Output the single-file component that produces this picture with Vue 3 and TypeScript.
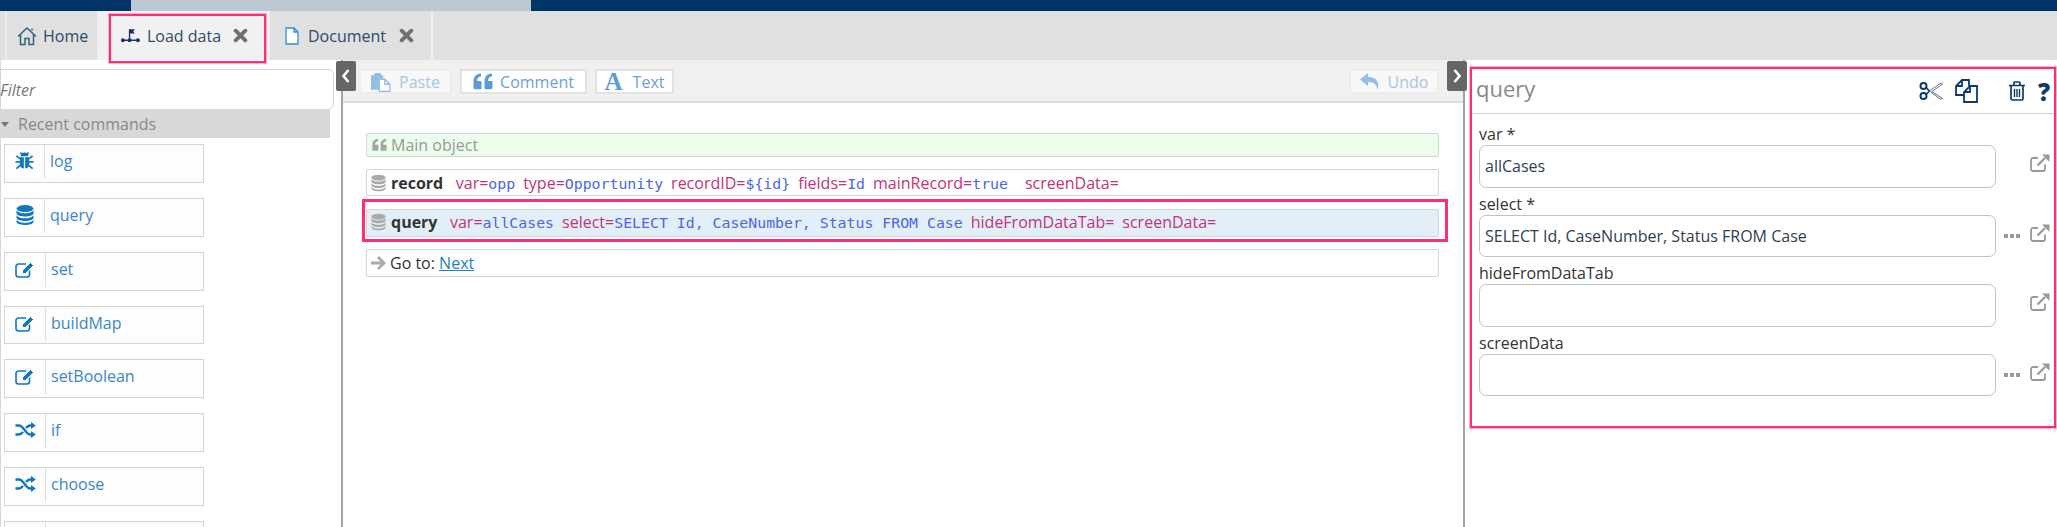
<script setup lang="ts">
interface Cmd { name: string; icon: string; short?: boolean }
interface Param { k: string; v?: string }
interface Field { label: string; value: string; dots: boolean }

const commands: Cmd[] = [
  { name: 'log', icon: 'bug' },
  { name: 'query', icon: 'db' },
  { name: 'set', icon: 'edit' },
  { name: 'buildMap', icon: 'edit', short: true },
  { name: 'setBoolean', icon: 'edit' },
  { name: 'if', icon: 'random' },
  { name: 'choose', icon: 'random' },
  { name: '', icon: 'random' },
]
const recordParams: Param[] = [
  { k: 'var=', v: 'opp' },
  { k: 'type=', v: 'Opportunity' },
  { k: 'recordID=', v: '${id}' },
  { k: 'fields=', v: 'Id' },
  { k: 'mainRecord=', v: 'true ' },
  { k: 'screenData=' },
]
const queryParams: Param[] = [
  { k: 'var=', v: 'allCases' },
  { k: 'select=', v: 'SELECT Id, CaseNumber, Status FROM Case' },
  { k: 'hideFromDataTab=' },
  { k: 'screenData=' },
]
const fields: Field[] = [
  { label: 'var *', value: 'allCases', dots: false },
  { label: 'select *', value: 'SELECT Id, CaseNumber, Status FROM Case', dots: true },
  { label: 'hideFromDataTab', value: '', dots: false },
  { label: 'screenData', value: '', dots: true },
]
</script>

<template>
  <div class="page">
    <svg class="sprite" width="0" height="0" aria-hidden="true">
      <symbol id="home" viewBox="0 0 20 20">
        <path d="M1 10.5 10 2l9 8.500M3.500 8.500V18.500h4.500v-6h4v6h4.500V8.500M15 2.500v2" fill="none" stroke="currentColor" stroke-width="1.500" />
      </symbol>
      <symbol id="flow" viewBox="0 0 20 15">
        <path d="M1.500 12.500h17M9 12.500V1" fill="none" stroke="currentColor" stroke-width="1.400" />
        <path d="M9 1h5.500L13 3.200l1.500 2.300H9z" fill="currentColor" />
        <circle cx="2" cy="12.500" r="2" fill="currentColor" />
        <circle cx="9" cy="12.500" r="2" fill="currentColor" />
        <circle cx="17.800" cy="12.500" r="2" fill="currentColor" />
      </symbol>
      <symbol id="close" viewBox="0 0 14 14">
        <path d="M2.500 2.500l9 9M11.500 2.500l-9 9" fill="none" stroke="currentColor" stroke-width="3.600" stroke-linecap="round" />
      </symbol>
      <symbol id="doc" viewBox="0 0 14 18">
        <path d="M1 1h8l4 4v12H1zM9 1v4h4" fill="#fff" stroke="currentColor" stroke-width="1.300" />
      </symbol>
      <symbol id="bug" viewBox="0 0 20 20">
        <path d="M6 5a4 4 0 0 1 8 0z" fill="currentColor" />
        <path d="M5 6h4.300v12C6.500 17.700 5 15.500 5 13zM10.700 6H15v7c0 2.500-1.500 4.700-4.300 5z" fill="currentColor" />
        <path d="M1.500 4.500 5 7.500M18.500 4.500 15 7.500M.5 11h4.500M19.500 11H15M1.500 18l4-3.500M18.500 18l-4-3.500M7 3 5.800 1M13 3l1.200-2" fill="none" stroke="currentColor" stroke-width="1.800" />
      </symbol>
      <symbol id="db" viewBox="0 0 18 20">
        <ellipse cx="9" cy="3.600" rx="8.500" ry="3.500" fill="currentColor" />
        <path d="M.5 5.200C2 7.600 6 8.300 9 8.300s7-.7 8.500-3.100V8.400c-1 2.300-5 3-8.500 3s-7.500-.7-8.500-3z" fill="currentColor" />
        <path d="M.5 10.200C2 12.600 6 13.300 9 13.300s7-.7 8.500-3.100V13c-1 2.300-5 3-8.500 3s-7.500-.7-8.500-3z" fill="currentColor" />
        <path d="M.5 14.800c1.500 2.400 5.500 3.100 8.500 3.100s7-.7 8.500-3.100V17c-1 2.300-5 3-8.500 3s-7.500-.7-8.500-3z" fill="currentColor" />
      </symbol>
      <symbol id="edit" viewBox="0 0 21 17">
        <path d="M14.500 9.500V13.500a2.500 2.500 0 0 1-2.500 2.500H3.500A2.500 2.500 0 0 1 1 13.500V5.500A2.500 2.500 0 0 1 3.500 3H11" fill="none" stroke="currentColor" stroke-width="1.600" />
        <path d="M7.500 9.500 15.500 1.500l3 3L10.500 12.500H7.500z" fill="currentColor" stroke="#fdfdfd" stroke-width="1" />
      </symbol>
      <symbol id="random" viewBox="0 0 21 16">
        <path d="M.5 3.500H4c4.500 0 7 9 11 9h2M.5 12.500H4c1.800 0 3-1.200 4-2.600M11 6c1-1.300 2.300-2.500 4-2.500h2" fill="none" stroke="currentColor" stroke-width="2.300" />
        <path d="M16 0l4.800 3.500L16 7zM16 9l4.800 3.500L16 16z" fill="currentColor" />
      </symbol>
      <symbol id="quote" viewBox="0 0 20 17">
        <path d="M8.500 8.500v6.500a1.300 1.300 0 0 1-1.300 1.300H1.500A1.300 1.300 0 0 1 .5 15V8C.5 3.500 3.500.5 8 .5v3C5.500 3.500 4 5.500 4 8h3.200a1.300 1.300 0 0 1 1.300.5zM19.500 8.500v6.500a1.300 1.300 0 0 1-1.300 1.300h-5.700a1.300 1.300 0 0 1-1-1.300V8c0-4.500 3-7.500 7.500-7.500v3c-2.500 0-4 2-4 4.500h3.200a1.300 1.300 0 0 1 1.300.5z" fill="currentColor" />
      </symbol>
      <symbol id="paste" viewBox="0 0 18 18">
        <path d="M0 3h3V1h6v2h2v3H7v10H0z" fill="currentColor" />
        <path d="M7.500 6.500h5l4.500 4.500v6.500H7.500zM12.500 6.500V11H17" fill="#fff" stroke="currentColor" stroke-width="1.200" />
      </symbol>
      <symbol id="undo" viewBox="0 0 20 17">
        <path d="M8 0 0 6.500 8 13V9c5 0 8.500 1 9.500 8C20 10 17 4 8 4z" fill="currentColor" />
      </symbol>
      <symbol id="arrow" viewBox="0 0 15 14">
        <path d="M8 0l7 7-7 7-2-2 3.500-3.500H0v-3h9.500L6 2z" fill="currentColor" />
      </symbol>
      <symbol id="scissors" viewBox="0 0 24 18">
        <circle cx="4.500" cy="4" r="3" fill="none" stroke="currentColor" stroke-width="2" />
        <circle cx="4.500" cy="14" r="3" fill="none" stroke="currentColor" stroke-width="2" />
        <path d="M7 5.500 10.500 9 7 12.500" fill="none" stroke="currentColor" stroke-width="1.600" />
        <path d="M10.500 9 21 1.500l2.500.5L13 9.500l10.500 7-2.500.5z" fill="#fff" stroke="#5a7894" stroke-width="1" />
      </symbol>
      <symbol id="copy" viewBox="0 0 24 24">
        <path d="M15 7V1H8L2 7v9h8M8 1v6H2" fill="none" stroke="currentColor" stroke-width="1.800" />
        <path d="M16 7h7v16H10V13zM16 7v6h-6" fill="#fff" stroke="currentColor" stroke-width="1.800" />
      </symbol>
      <symbol id="trash" viewBox="0 0 18 20">
        <path d="M1 4.500h16M6 4.500V2a1 1 0 0 1 1-1h4a1 1 0 0 1 1 1v2.500M3 4.500V18a1.500 1.500 0 0 0 1.500 1h9a1.500 1.500 0 0 0 1.500-1V4.500" fill="none" stroke="currentColor" stroke-width="1.700" />
        <path d="M6.500 8v8M9 8v8M11.500 8v8" fill="none" stroke="currentColor" stroke-width="1.400" />
      </symbol>
      <symbol id="ext" viewBox="0 0 20 18">
        <path d="M15 10.500V15a2 2 0 0 1-2 2H3a2 2 0 0 1-2-2V6a2 2 0 0 1 2-2h5" fill="none" stroke="currentColor" stroke-width="1.800" />
        <path d="M7.500 11.500 15 4" fill="none" stroke="currentColor" stroke-width="2.300" />
        <path d="M12 .5h7.500V8z" fill="currentColor" />
      </symbol>
    </svg>

    <div class="topbar">
      <div class="seg seg-a"></div>
      <div class="seg seg-b"></div>
      <div class="seg seg-c"></div>
    </div>

    <nav class="tabs">
      <div class="tab tab-home">
        <svg class="i-home"><use href="#home" /></svg>
        <span>Home</span>
      </div>
      <div class="tab tab-load">
        <svg class="i-flow"><use href="#flow" /></svg>
        <span>Load data</span>
        <svg class="i-close"><use href="#close" /></svg>
        <div class="tab-mark"></div>
      </div>
      <div class="tab tab-doc">
        <svg class="i-doc"><use href="#doc" /></svg>
        <span>Document</span>
        <svg class="i-close"><use href="#close" /></svg>
      </div>
    </nav>

    <main class="body">
      <aside class="left">
        <div class="filter">Filter</div>
        <div class="recent"><span class="caret"></span>Recent commands</div>
        <ul class="cmds">
          <li v-for="c in commands" :key="c.icon + c.name" class="cmd" :class="{ short: c.short, wide: c.icon !== 'bug' && c.icon !== 'db' }">
            <span class="cmd-icon"><svg :class="'ci-' + c.icon"><use :href="'#' + c.icon" /></svg></span>
            <span class="cmd-name">{{ c.name }}</span>
          </li>
        </ul>
        <button class="toggle toggle-l" aria-label="Collapse">
          <svg viewBox="0 0 10 16"><path d="M7.500 2 2.500 8l5 6" fill="none" stroke="#fff" stroke-width="2.600" /></svg>
        </button>
      </aside>

      <section class="center">
        <div class="toolbar">
          <button class="tbtn off btn-paste"><svg class="ti"><use href="#paste" /></svg>Paste</button>
          <button class="tbtn btn-comment"><svg class="ti ti-q"><use href="#quote" /></svg>Comment</button>
          <button class="tbtn btn-text"><span class="glyph-a">A</span>Text</button>
          <button class="tbtn off btn-undo"><svg class="ti ti-u"><use href="#undo" /></svg>Undo</button>
        </div>
        <div class="rows">
          <div class="row row-comment"><svg class="ri-q"><use href="#quote" /></svg>Main object</div>
          <div class="row row-cmd">
            <svg class="ri"><use href="#db" /></svg><b>record</b>
            <span class="params">
              <span v-for="p in recordParams" :key="p.k" class="param"><span class="k">{{ p.k }}</span><span class="v">{{ p.v }}</span></span>
            </span>
          </div>
          <div class="selected">
            <div class="row row-cmd row-sel">
              <svg class="ri"><use href="#db" /></svg><b>query</b>
              <span class="params">
                <span v-for="p in queryParams" :key="p.k" class="param"><span class="k">{{ p.k }}</span><span class="v">{{ p.v }}</span></span>
              </span>
            </div>
          </div>
          <div class="row row-goto">
            <svg class="ri-a"><use href="#arrow" /></svg>Go to:&nbsp;<a href="#" class="next">Next</a>
          </div>
        </div>
        <button class="toggle toggle-r" aria-label="Expand">
          <svg viewBox="0 0 10 16"><path d="M2.500 2l5 6-5 6" fill="none" stroke="#fff" stroke-width="2.600" /></svg>
        </button>
      </section>

      <aside class="right">
        <div class="props">
          <header class="props-head">
            <h2>query</h2>
            <svg class="hi hi-s"><use href="#scissors" /></svg>
            <svg class="hi hi-c"><use href="#copy" /></svg>
            <svg class="hi hi-t"><use href="#trash" /></svg>
            <span class="help">?</span>
          </header>
          <div class="form">
            <div v-for="f in fields" :key="f.label" class="field">
              <label>{{ f.label }}</label>
              <div class="line">
                <input class="inp" :value="f.value" readonly />
                <span class="dots"><template v-if="f.dots"><i></i><i></i><i></i></template></span>
                <svg class="ext"><use href="#ext" /></svg>
              </div>
            </div>
          </div>
        </div>
      </aside>
    </main>
  </div>
</template>

<style>
html, body { margin: 0; background: #fff; overflow: hidden; }
</style>

<style scoped>
.page {
  width: 2057px;
  height: 527px;
  overflow: hidden;
  display: flex;
  flex-direction: column;
  font-family: "Open Sans", "Noto Sans", sans-serif;
  font-size: 16px;
  color: #333;
  background: #fff;
}
.sprite { position: absolute; }
svg { display: block; flex: none; }

.topbar { height: 11px; display: flex; flex: none; }
.seg-a { width: 131px; background: #003366; }
.seg-b { width: 400px; background: #b9c8d3; }
.seg-c { flex: 1; background: #003366; }

.tabs {
  height: 49px;
  flex: none;
  display: flex;
  background: #e0e0e0;
  padding-left: 5px;
  color: #2d4a68;
  font-size: 16px;
}
.tab {
  display: flex;
  align-items: center;
  height: 49px;
  box-sizing: border-box;
  border-left: 2px solid #eee;
  position: relative;
}
.tab-home { width: 92px; padding-left: 10px; color: #2d4a68; }
.tab-home span { margin-left: 6px; }
.i-home { width: 20px; height: 20px; color: #33607f; }
.tab-load {
  width: 173px;
  padding-left: 24px;
  background: #f1f1f1;
  border-right: 2px solid #eee;
  border-left: 0;
}
.tab-load span { margin-left: 7px; }
.i-flow { width: 19px; height: 15px; color: #17345a; }
.i-close { width: 15px; height: 15px; color: #707070; }
.tab-load .i-close { margin-left: 12px; }
.tab-mark {
  position: absolute;
  left: 12px;
  top: 3px;
  width: 157px;
  height: 49px;
  box-sizing: border-box;
  border: 2px solid #ff2e6c;
  box-shadow: 0 0 0 1px rgba(255, 46, 108, 0.35);
  pointer-events: none;
}
.tab-doc {
  width: 163px;
  padding-left: 15px;
  border-left: 0;
  border-right: 2px solid #eee;
}
.tab-doc span { margin-left: 9px; }
.tab-doc .i-close { margin-left: 13px; }
.i-doc { width: 14px; height: 18px; color: #2f8fd0; }

.body { flex: 1; display: flex; min-height: 0; }

.left {
  width: 341px;
  flex: none;
  box-sizing: border-box;
  position: relative;
  z-index: 2;
  border-left: 1px solid #d8d8d8;
}
.filter {
  height: 41px;
  margin: 9px 7px 0 -6px;
  box-sizing: border-box;
  border: 1px solid #cfd8df;
  border-radius: 6px;
  padding-left: 4px;
  line-height: 41px;
  font-style: italic;
  color: #777;
}
.recent {
  height: 28px;
  width: 329px;
  background: #d8d8d8;
  color: #888;
  line-height: 28px;
  padding-left: 17px;
  box-sizing: border-box;
  position: relative;
}
.caret {
  position: absolute;
  left: 0;
  top: 12px;
  border-left: 4px solid transparent;
  border-right: 4px solid transparent;
  border-top: 5px solid #777;
}
.cmds { list-style: none; margin: 0; padding: 6px 0 0 3px; }
.cmd {
  width: 200px;
  height: 39px;
  margin-bottom: 15px;
  box-sizing: border-box;
  border: 1px solid #d4d4d4;
  background: #fdfdfd;
  display: flex;
  color: #3b86c8;
}
.cmd.short { height: 38px; }
.cmd-icon {
  width: 39px;
  height: 32px;
  border-right: 1px solid #ddd;
  display: flex;
  align-items: center;
  justify-content: center;
  color: #0f76c0;
  flex: none;
  padding-bottom: 2px;
  box-sizing: content-box;
  margin-bottom: auto;
}
.cmd.wide .cmd-icon { width: 40px; }
.cmd-name { padding-left: 5px; line-height: 33px; }
.ci-bug { width: 19px; height: 20px; }
.ci-db { width: 18px; height: 20px; }
.ci-edit { width: 21px; height: 17px; }
.ci-random { width: 21px; height: 16px; }

.center {
  width: 1124px;
  flex: none;
  box-sizing: border-box;
  border-left: 2px solid #a4a4a4;
  border-right: 2px solid #a4a4a4;
  position: relative;
}
.toolbar {
  height: 43px;
  box-sizing: border-box;
  background: #f0f0f0;
  border-bottom: 2px solid #dcdcdc;
  padding: 9px 24px 0 16px;
  display: flex;
  gap: 8px;
}
.tbtn {
  height: 25px;
  padding: 0;
  box-sizing: border-box;
  border: 2px solid #e2e2e2;
  background: #fff;
  color: #6d9fd8;
  font: 16px "Open Sans", "Noto Sans", sans-serif;
  display: flex;
  align-items: center;
  justify-content: center;
  gap: 8px;
}
.off { background: #f8f8f8; color: #a8c6e6; border-color: #ececec; }
.btn-paste { width: 93px; }
.btn-comment { width: 127px; gap: 7px; }
.btn-text { width: 79px; gap: 10px; }
.btn-undo { width: 90px; margin-left: auto; }
.ti { width: 20px; height: 20px; color: #93bce6; }
.ti-q { width: 20px; height: 17px; color: #5b9bd8; }
.ti-u { width: 20px; height: 17px; }
.glyph-a {
  font: bold 25px "Liberation Serif", serif;
  color: #5b9bd8;
  line-height: 20px;
}

.rows { padding: 30px 24px 0 23px; }
.row {
  box-sizing: border-box;
  border: 1px solid #d4d4d4;
  border-radius: 2px;
  display: flex;
  align-items: center;
  padding-left: 4px;
  white-space: nowrap;
}
.row-comment { height: 24px; background: #ecfdec; color: #999; margin-bottom: 12px; line-height: 26px; padding-left: 5px; }
.ri-q { width: 15px; height: 14px; color: #a5a5a5; margin-right: 4px; }
.row-cmd { height: 27px; }
.row-cmd b { color: #333; font-weight: 700; }
.ri { width: 15px; height: 18px; color: #aaa; margin-right: 5px; }
.params { display: flex; margin-left: 12.500px; }
.param { margin-right: 8px; }
.k { color: #c4327a; }
.v { color: #4a66e6; font: 14.850px "DejaVu Sans Mono", monospace; white-space: pre; }
.selected {
  box-sizing: border-box;
  margin: 3px -9px 7px -4px;
  padding: 7px 6px 2px 1px;
  height: 43px;
  border: 3px solid #ff2e6c;
}
.row-sel { height: 28px; background: #e3eff8; padding-bottom: 2px; }
.row-goto { height: 28px; color: #333; }
.ri-a { width: 15px; height: 14px; color: #aaa; margin-right: 4px; }
.next { color: #1e80c0; text-decoration: underline; }

.toggle {
  position: absolute;
  top: 1px;
  z-index: 3;
  width: 20px;
  height: 30px;
  padding: 0;
  border: 0;
  border-radius: 2px;
  background: #666;
  display: flex;
  align-items: center;
  justify-content: center;
}
.toggle svg { width: 10px; height: 16px; }
.toggle-l { right: -15px; }
.toggle-r { right: -4px; }

.right { flex: 1; min-width: 0; padding: 7px 1px 0 5px; }
.props {
  box-sizing: border-box;
  height: 361px;
  border: 2px solid #ff2e6c;
  box-shadow: 0 0 0 1px rgba(255, 46, 108, 0.35);
}
.props-head {
  height: 44px;
  border-bottom: 1px solid #d0d0d0;
  display: flex;
  align-items: center;
  padding-left: 4px;
  position: relative;
}
.props-head h2 { margin: 0 auto 6px 0; font-size: 22px; font-weight: 400; color: #888; }
.hi { color: #0d3a66; }
.hi-s { width: 24px; height: 18px; margin-right: 11px; }
.hi-c { width: 24px; height: 24px; margin-right: 30px; }
.hi-t { width: 18px; height: 20px; margin-right: 12px; }
.help { width: 12px; margin-right: 4px; font: 800 24px "Open Sans", sans-serif; color: #0d3a66; }
.form { padding: 9px 0 0 7px; }
.field { margin-bottom: 5px; }
.field label { display: block; height: 22px; line-height: 22px; color: #333; }
.line { display: flex; align-items: center; }
.inp {
  width: 517px;
  height: 42.500px;
  box-sizing: border-box;
  border: 1px solid #b8c6d2;
  border-radius: 7px;
  padding: 0 5px;
  font: 16px "Open Sans", "Noto Sans", sans-serif;
  color: #2d3e50;
  outline: none;
  background: #fff;
}
.dots { width: 16px; margin-left: 8px; display: flex; gap: 2px; }
.dots i { width: 4px; height: 4px; background: #999; }
.ext { width: 20px; height: 18px; margin-left: 10px; margin-top: -6px; color: #999; }
</style>
